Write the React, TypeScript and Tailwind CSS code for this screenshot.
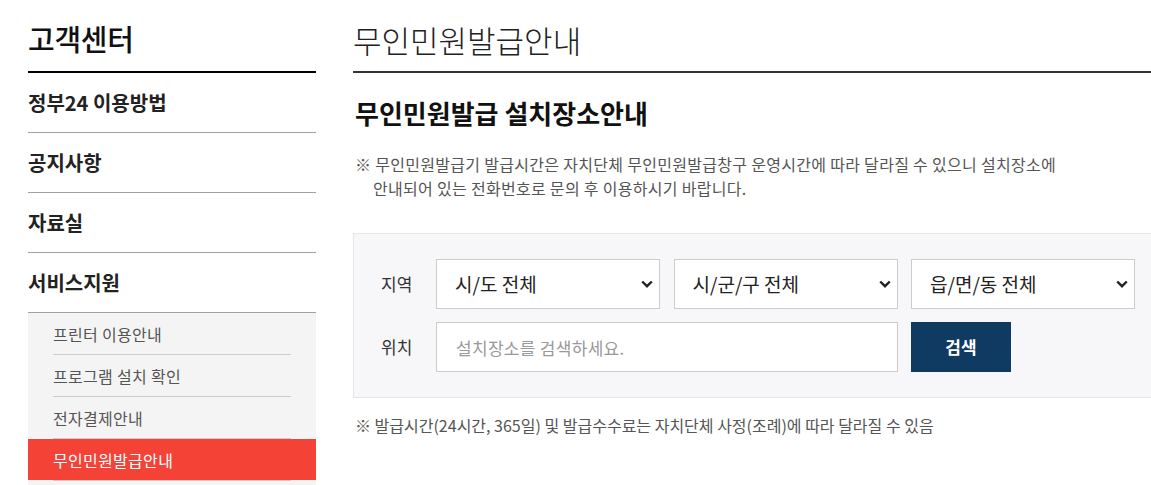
const font = { fontFamily: '"Noto Sans CJK KR", "Noto Sans", sans-serif' }

function Chevron() {
  return (
    <svg
      width="12"
      height="8"
      viewBox="0 0 12 8"
      className="pointer-events-none absolute right-[7px] top-1/2 -translate-y-1/2"
    >
      <polyline points="1.2,1.5 6,6.2 10.8,1.5" fill="none" stroke="#222" strokeWidth="2.4" />
    </svg>
  )
}

function Select({ label }: { label: string }) {
  return (
    <div className="relative w-[224px] h-[50px]">
      <select
        defaultValue={label}
        className="w-full h-full appearance-none bg-white border border-[#cccccc] pl-[18px] text-[19px] text-[#222] outline-none"
        style={font}
      >
        <option>{label}</option>
      </select>
      <Chevron />
    </div>
  )
}

export default function App() {
  const menus = ['정부24 이용방법', '공지사항', '자료실', '서비스지원']
  const subMenus = [
    { name: '프린터 이용안내', active: false },
    { name: '프로그램 설치 확인', active: false },
    { name: '전자결제안내', active: false },
    { name: '무인민원발급안내', active: true }
  ]

  return (
    <div className="w-[1151px] h-[485px] overflow-hidden bg-white flex pl-[28px] gap-[37px]" style={font}>
      {/* Side menu */}
      <aside className="w-[288px] shrink-0 flex flex-col">
        <h1 className="h-[73px] pt-[7px] flex items-center text-[29px] font-medium text-[#111] tracking-[-0.3px] border-b-2 border-black">
          고객센터
        </h1>
        {menus.map((m) => (
          <div
            key={m}
            className="h-[60px] flex items-center border-b border-[#a0a0a0] text-[20px] font-bold text-[#222]"
          >
            {m}
          </div>
        ))}
        <div className="flex-1 bg-[#f4f4f4]">
          {subMenus.map((s) => (
            <div key={s.name}>
              <div
                className={`h-[41px] flex items-center px-[25px] text-[16px] tracking-[0.3px] ${
                  s.active ? 'bg-[#f44336] text-white' : 'text-[#555]'
                }`}
              >
                {s.name}
              </div>
              <div className="mx-[25px] h-px bg-[#cccccc]" />
            </div>
          ))}
        </div>
      </aside>

      {/* Content */}
      <main className="w-[830px] shrink-0">
        <h2 className="h-[73px] pt-[9px] flex items-center text-[31px] font-light text-[#222] border-b-2 border-[#333]">
          무인민원발급안내
        </h2>
        <h3 className="mt-[23px] pl-[2px] text-[26px] leading-[34px] font-bold text-[#111]">
          무인민원발급 설치장소안내
        </h3>
        <p className="mt-[22px] pl-[20px] -indent-[18px] text-[16px] leading-[24px] text-[#555] tracking-[0.3px]">
          ※ 무인민원발급기 발급시간은 자치단체 무인민원발급창구 운영시간에 따라 달라질 수 있으니 설치장소에
          <br />
          안내되어 있는 전화번호로 문의 후 이용하시기 바랍니다.
        </p>

        <div className="mt-[33px] w-[840px] bg-[#f7f7f9] border border-[#e5e5e5] py-[25px] flex flex-col gap-[13px]">
          <div className="flex items-center">
            <span className="w-[82px] pl-[27px] text-[17px] text-[#333]">지역</span>
            <div className="flex gap-[13.5px]">
              <Select label="시/도 전체" />
              <Select label="시/군/구 전체" />
              <Select label="읍/면/동 전체" />
            </div>
          </div>
          <div className="flex items-center">
            <span className="w-[82px] pl-[27px] text-[17px] text-[#333]">위치</span>
            <div className="flex gap-[13.5px]">
              <input
                placeholder="설치장소를 검색하세요."
                className="w-[461.5px] h-[50px] bg-white border border-[#cccccc] pl-[19px] text-[17px] tracking-[0.3px] text-[#222] placeholder:text-[#999] outline-none"
                style={font}
              />
              <button
                className="w-[100px] h-[50px] bg-[#0f3a62] text-white text-[17px] font-bold flex items-center justify-center"
                style={font}
              >
                검색
              </button>
            </div>
          </div>
        </div>

        <p className="mt-[15px] pl-[2px] text-[16px] leading-[24px] text-[#555]">
          ※ 발급시간(24시간, 365일) 및 발급수수료는 자치단체 사정(조례)에 따라 달라질 수 있음
        </p>
      </main>
    </div>
  )
}
